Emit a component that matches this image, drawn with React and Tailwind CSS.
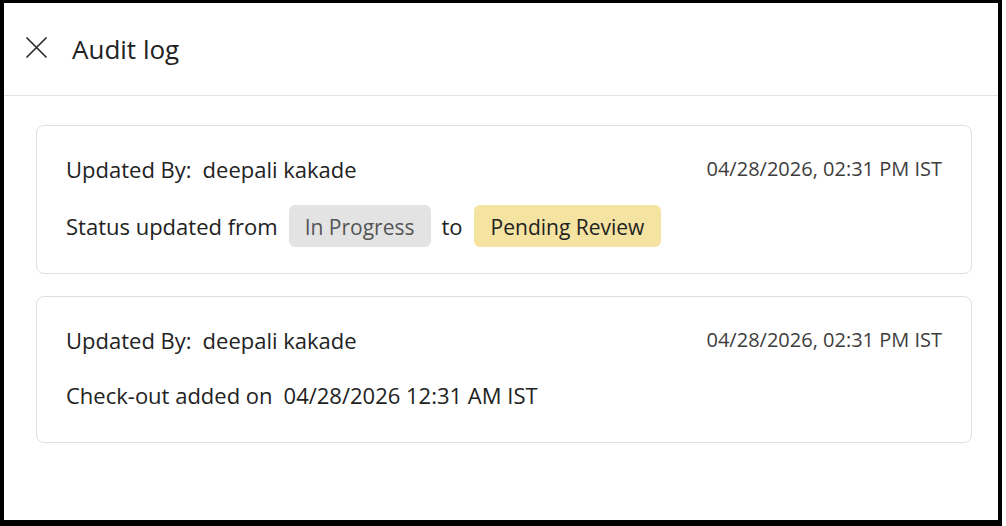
import React from "react";

const entries = [
  {
    by: "deepali kakade",
    at: "04/28/2026, 02:31 PM IST",
    kind: "status",
    from: "In Progress",
    to: "Pending Review",
  },
  {
    by: "deepali kakade",
    at: "04/28/2026, 02:31 PM IST",
    kind: "checkout",
    text: "04/28/2026 12:31 AM IST",
  },
];

const CloseIcon = () => (
  <svg width="21" height="21" viewBox="0 0 21 21" className="text-[#2b2b2b] -mt-[4px]">
    <path d="M1 1L20 20M20 1L1 20" stroke="currentColor" strokeWidth="1.7" strokeLinecap="round" />
  </svg>
);

const LogCard = ({ entry }) => {
  const isStatus = entry.kind === "status";
  return (
    <div className="rounded-[8px] border border-[#dedede] bg-white pt-[29px] pb-[26px] pl-[29px] pr-[29px]">
      <div className="flex items-center justify-between h-[28px]">
        <p className="text-[22px] text-[#222]">
          Updated By:<span className="ml-[11px]">{entry.by}</span>
        </p>
        <p className="text-[20px] text-[#3d3d3d]">{entry.at}</p>
      </div>
      <div
        className={
          isStatus
            ? "mt-[22px] flex items-center h-[42px] gap-[11px] text-[22px] text-[#222]"
            : "mt-[20px] flex items-center h-[42px] gap-[11px] text-[22px] text-[#222]"
        }
      >
        {isStatus ? (
          <>
            <span>Status updated from</span>
            <span className="h-[42px] flex items-center pt-[3px] px-[16px] rounded-[6px] bg-[#e3e3e3] text-[#555] text-[21px]">
              {entry.from}
            </span>
            <span>to</span>
            <span className="h-[42px] flex items-center pt-[3px] px-[17px] rounded-[6px] bg-[#f4e3a1] text-[#222] text-[21px]">
              {entry.to}
            </span>
          </>
        ) : (
          <span>
            Check-out added on<span className="ml-[11px]">{entry.text}</span>
          </span>
        )}
      </div>
    </div>
  );
};

export default function App() {
  return (
    <div className="w-[1006px] h-[526px] bg-white" style={{ fontFamily: "'Open Sans', sans-serif" }}>
      <div className="w-[1002px] h-[526px] border-t-[3px] border-l-[4px] border-r-[4px] border-b-[6px] border-black flex flex-col">
        <div className="h-[93px] flex items-center gap-[25px] pl-[22px] border-b border-[#e2e2e2]">
          <CloseIcon />
          <h1 className="text-[26px] text-[#222]">Audit log</h1>
        </div>
        <div className="pt-[29px] pl-[32px] pr-[26px] flex flex-col gap-[22px]">
          {entries.map((e, i) => (
            <LogCard key={i} entry={e} />
          ))}
        </div>
      </div>
    </div>
  );
}
